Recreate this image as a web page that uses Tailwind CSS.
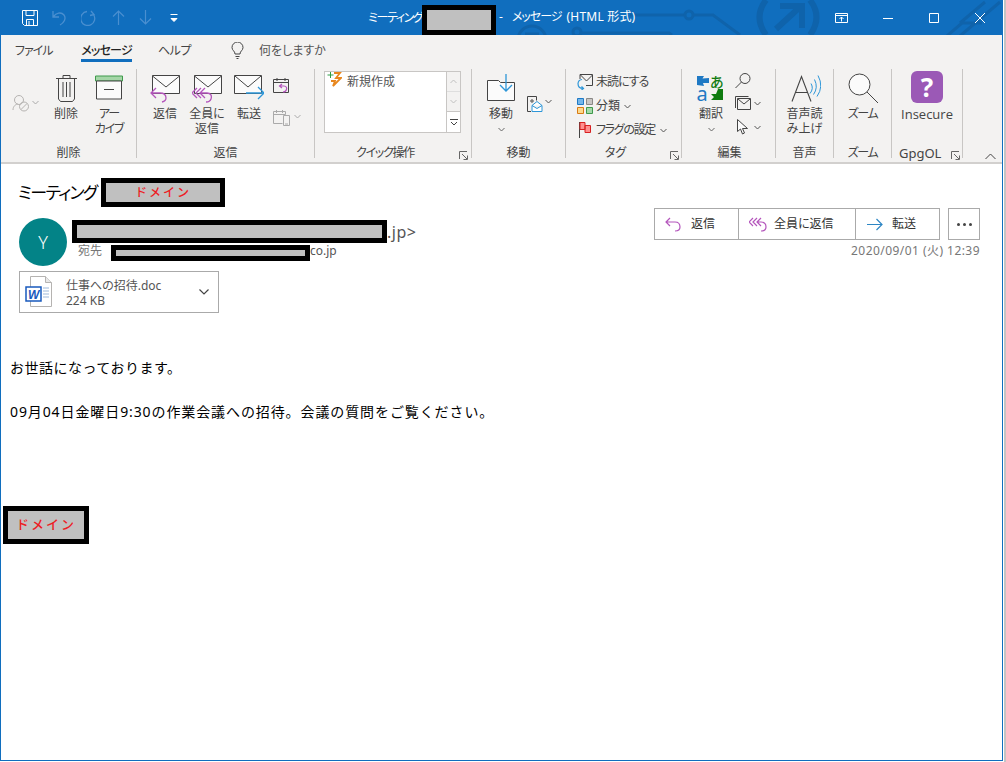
<!DOCTYPE html>
<html lang="ja">
<head>
<meta charset="utf-8">
<script src="https://cdn.jsdelivr.net/npm/@tailwindcss/browser@4"></script>
<title>Message</title>
</head>
<body class="w-[1006px] h-[762px] overflow-hidden bg-white">
<div class="flex w-[1006px] h-[762px] font-[family-name:Noto_Sans,Noto_Sans_CJK_JP,sans-serif] [font-feature-settings:'palt']">
<div class="w-[1003px] h-[761px] flex flex-col border-l border-r border-b border-[#106ebe] bg-white">

  <!-- title bar -->
  <header class="relative h-[35px] shrink-0 bg-[#106ebe] flex items-center text-white text-[12px] -ml-px -mr-px overflow-hidden">
    <svg class="absolute left-0 top-0" width="1003" height="35" viewBox="0 0 1003 35" fill="none" stroke="#0f63ab" stroke-width="3">
      <circle cx="532" cy="40" r="14"/><path d="M525 34h14"/><circle cx="577" cy="32" r="4"/><path d="M581 33h88l3 2"/>
      <path d="M630 15h55"/><circle cx="689" cy="15" r="4"/><path d="M693 15h20l27 20"/>
      <path d="M766 0q-13 17 0 35M810 0q13 17 0 35" stroke-width="6"/><path d="M776 29l24-22M780 6h22v22" stroke-width="6"/>
      <path d="M947 36l15-13h20M960 36l40-34M985 2l-25 21"/>
    </svg>
    <div class="relative flex items-center w-full h-full">
      <div class="flex items-center w-[368px] pl-[22px] gap-[14px]">
        <svg width="16" height="16" viewBox="0 0 16 16" fill="none" stroke="#fff"><path d="M.5.5h15v15h-13l-2-2zM4 .5v5h8v-5M4.5 15.5v-6h7v6M7 11v4"/></svg>
        <svg width="14" height="16" viewBox="0 0 14 16" fill="none" stroke="#4a8fd0" stroke-width="1.3"><path d="M1 1v6h6M1.5 6.5C4 3 9 1.500 12 5c2.500 3.500 0 8-4 10"/></svg>
        <svg width="16" height="16" viewBox="0 0 16 16" fill="none" stroke="#4a8fd0" stroke-width="1.3" class="ml-[1px]"><path d="M10 1l3 3.500-4 1M12.500 4.500A7 7 0 1 1 6 1.500"/></svg>
        <svg width="13" height="15" viewBox="0 0 13 15" fill="none" stroke="#4a8fd0" stroke-width="1.2" class="ml-[1px]"><path d="M6.500 15V1M1 6.500l5.500-5.500 5.500 5.500"/></svg>
        <svg width="13" height="15" viewBox="0 0 13 15" fill="none" stroke="#4a8fd0" stroke-width="1.2"><path d="M6.500 0v14M1 8.500l5.500 5.500 5.500-5.500"/></svg>
        <svg width="8" height="8" viewBox="0 0 8 8" fill="none" stroke="#fff" class="ml-[4px]"><path d="M.5 .5h7"/><path d="M1 4.500h6L4 7.500z" fill="#fff"/></svg>
      </div>
      <span class="whitespace-nowrap leading-[35px] w-[52px] mt-[-1px] tracking-[-1.400px]">ミーティング</span>
      <div class="w-[74px] h-[30px] mt-[5px] ml-[2px] border-[5px] border-black bg-[#c0c0c0]"></div>
      <div class="ml-[3px] flex whitespace-pre w-[336px] mt-[-1px]"><span>-</span><span class="ml-[9px] tracking-[-1px]">メッセージ</span><span class="ml-[5px] tracking-[.2px]">(HTML 形式)</span></div>
      <svg width="13" height="10" viewBox="0 0 13 10" fill="none" stroke="#fff"><path d="M.5.500h12v9H.5zM.5 2.500h12M6.500 8.500V4M4.500 6l2-2 2 2"/></svg>
      <svg width="10" height="10" viewBox="0 0 10 10" fill="none" stroke="#fff" class="ml-[35px]"><path d="M0 5.500h10"/></svg>
      <svg width="10" height="10" viewBox="0 0 10 10" fill="none" stroke="#fff" class="ml-[36px]"><path d="M.5.500h9v9h-9z"/></svg>
      <svg width="10" height="10" viewBox="0 0 10 10" fill="none" stroke="#fff" class="ml-[36px]"><path d="M0 0l10 10M10 0L0 10"/></svg>
    </div>
  </header>

  <!-- tabs -->
  <nav class="h-[27px] shrink-0 bg-[#f3f2f1] flex text-[12px] text-[#444] leading-[31px]">
    <span class="ml-[14px] w-[37px] whitespace-nowrap tracking-[-1px]">ファイル</span>
    <span class="ml-[29px] w-[51px] h-[27px] border-b-[3px] border-[#106ebe] font-medium text-[#222] text-center whitespace-nowrap tracking-[-.8px]">メッセージ</span>
    <span class="ml-[26px] w-[33px] whitespace-nowrap tracking-[-.5px]">ヘルプ</span>
    <svg class="ml-[40px] mt-[7px]" width="13" height="18" viewBox="0 0 13 18" fill="none" stroke="#444"><path d="M4 12c0-3-3-3.500-3-6.500a5.500 5.500 0 0 1 11 0C12 8.500 9 9 9 12zM4.500 14.500h4M5.500 16.500h2"/></svg>
    <span class="ml-[15px] whitespace-nowrap text-[#555]">何をしますか</span>
  </nav>

  <!-- ribbon -->
  <section class="relative h-[102px] shrink-0 bg-[#f3f2f1] pt-[7px] border-b-2 border-[#d2d0ce] flex text-[12px] text-[#444] leading-[14.500px]">

    <!-- 削除 -->
    <div class="w-[136px] h-[89px] border-r border-[#c8c6c4] flex flex-col">
      <div class="flex h-[73px] shrink-0 pt-[3px]">
        <div class="ml-[11px] w-[30px] pt-[22px] flex items-start">
          <svg width="18" height="18" viewBox="0 0 18 18" fill="none" stroke="#b5b3b1"><circle cx="7" cy="6" r="4.500"/><path d="M1 16c0-4 3-6 5-6"/><circle cx="12" cy="12.500" r="4.500"/><path d="M9 15.500l6-6"/></svg>
          <svg class="ml-[2px] mt-[6px]" width="7" height="5" viewBox="0 0 7 5" fill="none" stroke="#aaa"><path d="M.5 1l3 3 3-3"/></svg>
        </div>
        <div class="ml-[5px] w-[40px] flex flex-col items-center -translate-x-[1px]">
          <svg class="h-[32px] mb-[3px]" width="21" height="28" viewBox="0 0 21 28" fill="none" stroke="#444"><path d="M0 4.500h21M7 4V1.500h7V4M2.500 5v20l2 2.500h12l2-2.500V5M7 8v15M10.500 8v15M14 8v15"/></svg>
          <span>削除</span>
        </div>
        <div class="w-[44px] flex flex-col items-center text-center">
          <svg class="h-[32px] mb-[3px]" width="28" height="25" viewBox="0 0 28 25"><path fill="#a5d6a7" stroke="#3f9a4c" d="M.5.500h27v5H.5z"/><path fill="#fbfbfb" stroke="#444" d="M1.500 5.500h25v18h-25z"/><path stroke="#444" d="M9 14h10"/></svg>
          <span class="tracking-[-1.200px]">アー<br>カイブ</span>
        </div>
      </div>
      <div class="text-center pt-[4px]">削除</div>
    </div>

    <!-- 返信 -->
    <div class="w-[178px] h-[89px] border-r border-[#c8c6c4] flex flex-col">
      <div class="flex h-[73px] shrink-0 pt-[3px] pl-[7px]">
        <div class="w-[42px] flex flex-col items-center">
          <svg class="h-[32px] mb-[3px]" width="30" height="28" viewBox="0 0 30 28" fill="none"><path fill="#fbfbfb" stroke="#444" d="M2.500 1.500h27v18h-27z"/><path stroke="#444" d="M2.500 2l13.500 11 13.500-11"/><path stroke="#b455bc" stroke-width="1.300" d="M6 14l-5 5 5 5M1.500 19H10c4 0 6 2 6 5s-2 3.500-4 4"/></svg>
          <span>返信</span>
        </div>
        <div class="w-[42px] flex flex-col items-center text-center">
          <svg class="h-[32px] mb-[3px]" width="30" height="28" viewBox="0 0 30 28" fill="none"><path fill="#fbfbfb" stroke="#444" d="M2.500 1.500h27v18h-27z"/><path stroke="#444" d="M2.500 2l13.500 11 13.500-11"/><path stroke="#b455bc" stroke-width="1.300" d="M5 14l-5 5 5 5M9 14l-5 5 5 5M13 14l-5 5 5 5M9 19h6c4 0 5 3 4 6s-3 3-5 3"/></svg>
          <span class="whitespace-nowrap">全員に<br>返信</span>
        </div>
        <div class="w-[42px] flex flex-col items-center">
          <svg class="h-[32px] mb-[3px]" width="30" height="28" viewBox="0 0 30 28" fill="none"><path fill="#fbfbfb" stroke="#444" d="M.5 1.500h27v18H.5z"/><path stroke="#444" d="M1 2l13 11 13-11"/><path stroke="#2d96d8" stroke-width="1.300" d="M12 19h18M24 13l6 6-6 6"/></svg>
          <span>転送</span>
        </div>
        <div class="ml-[3px] w-[33px] flex flex-col pt-[5px] text-[#aaa]">
          <svg width="17" height="17" viewBox="0 0 17 17" fill="none"><path stroke="#444" d="M.5 2.500h15v13H.5zM.5 5.500h15M4 1v3M12 1v3"/><path stroke="#b455bc" stroke-width="1.200" d="M9 7L6.500 9 9 11M7 9h4c2.500 0 3 2 2.500 3.500S11 15 10 15"/></svg>
          <div class="flex items-start mt-[15px]">
            <svg width="17" height="17" viewBox="0 0 17 17" fill="none" stroke="#aaa"><path d="M9.500 14.500H.5v-12h12v3M.5 5.500h12M3.500 1v3M9.500 1v3M10.500 6.500h6v10h-6zM12 15h3"/></svg>
            <svg class="ml-[4px] mt-[5px]" width="7" height="5" viewBox="0 0 7 5" fill="none" stroke="#aaa"><path d="M.5 1l3 3 3-3"/></svg>
          </div>
        </div>
      </div>
      <div class="text-center pt-[4px]">返信</div>
    </div>

    <!-- クイック操作 -->
    <div class="relative w-[157px] h-[89px] border-r border-[#c8c6c4] flex flex-col">
      <div class="h-[73px] shrink-0 pt-[2px] pl-[9px]">
        <div class="w-[137px] h-[62px] flex border border-[#c8c6c4] bg-white">
          <div class="flex-1 flex items-start pl-[2px]">
            <svg width="15" height="17" viewBox="0 0 15 17" fill="none"><path stroke="#2e9e46" d="M3.500 0v6M.5 3h6"/><path stroke="#e8871e" stroke-width="1.800" d="M7 1h6l-4 5h5L6 14l2-5H4"/></svg>
            <span class="ml-[5px] leading-[20px] text-[#555]">新規作成</span>
          </div>
          <div class="w-[14px] flex flex-col border-l border-[#c8c6c4] bg-[#f3f2f1]">
            <div class="h-[20px] border-b border-[#dedede] flex items-center justify-center"><svg width="7" height="5" viewBox="0 0 7 5" fill="none" stroke="#c0c0c0"><path d="M.5 4l3-3 3 3"/></svg></div>
            <div class="h-[20px] border-b border-[#c8c6c4] flex items-center justify-center"><svg width="7" height="5" viewBox="0 0 7 5" fill="none" stroke="#c0c0c0"><path d="M.5 1l3 3 3-3"/></svg></div>
            <div class="flex-1 flex items-center justify-center bg-white"><svg width="8" height="7" viewBox="0 0 8 7" fill="none" stroke="#444"><path d="M0 .5h8M1 3l3 3 3-3"/></svg></div>
          </div>
        </div>
      </div>
      <div class="text-center pt-[4px] pr-[16px] tracking-[-1.300px]">クイック操作</div>
      <svg class="absolute left-[144px] top-[82px]" width="9" height="9" viewBox="0 0 9 9" fill="none" stroke="#666"><path d="M.5 8V.5H8M3 3l5 5M4.500 8.500h4v-4"/></svg>
    </div>

    <!-- 移動 -->
    <div class="w-[94px] h-[89px] border-r border-[#c8c6c4] flex flex-col">
      <div class="flex h-[73px] shrink-0 pt-[3px] pl-[9px]">
        <div class="w-[40px] flex flex-col items-center">
          <svg class="h-[32px] mb-[3px]" width="28" height="28" viewBox="0 0 28 28" fill="none"><path fill="#fbfbfb" stroke="#444" d="M.5 26.500V6.500h11l2 2h14v18z"/><path stroke="#2d96d8" stroke-width="1.300" d="M19 0v16M13 11l6 6 6-6"/></svg>
          <span>移動</span>
          <svg class="mt-[5px]" width="7" height="5" viewBox="0 0 7 5" fill="none" stroke="#666"><path d="M.5 1l3 3 3-3"/></svg>
        </div>
        <div class="ml-[6px] pt-[24px] flex items-start">
          <svg width="16" height="16" viewBox="0 0 16 16" fill="none"><path stroke="#444" d="M4 15.500H.5V.5h9v4"/><circle cx="5" cy="5" r="1.200" stroke="#444"/><path fill="#fff" stroke="#2d96d8" d="M5 9.500l5-4 5 4v6H5zM5 9.500l5 3 5-3"/></svg>
          <svg class="ml-[2px] mt-[3px]" width="7" height="5" viewBox="0 0 7 5" fill="none" stroke="#555"><path d="M.5 1l3 3 3-3"/></svg>
        </div>
      </div>
      <div class="text-center pt-[4px]">移動</div>
    </div>

    <!-- タグ -->
    <div class="relative w-[116px] h-[89px] border-r border-[#c8c6c4] flex flex-col">
      <div class="h-[73px] shrink-0 pl-[11px] pt-[5px] flex flex-col gap-[8px]">
        <div class="flex items-center h-[16px]">
          <svg width="16" height="16" viewBox="0 0 16 16" fill="none"><path stroke="#444" d="M3 5V.5h12.500v11H9M3.500 1l6 6 6-6"/><path stroke="#2d96d8" stroke-width="1.200" d="M5 5.500A4.500 4.500 0 0 0 1 9.500c0 3 2 5 5 5M4.500 12.500l2 2-2 1.500"/></svg>
          <span class="ml-[3px] whitespace-nowrap tracking-[-1px]">未読にする</span>
        </div>
        <div class="flex items-center h-[16px]">
          <svg width="16" height="16" viewBox="0 0 16 16"><path fill="#74b6ea" stroke="#1f79c4" d="M.5.500h6v6h-6z"/><path fill="#c8c6c4" stroke="#8a8886" d="M9.500.500h6v6h-6z"/><path fill="#fcd98c" stroke="#d87a14" d="M.5 9.500h6v6h-6z"/><path fill="#a5d9a9" stroke="#3f9a4c" d="M9.500 9.500h6v6h-6z"/></svg>
          <span class="ml-[3px]">分類</span>
          <svg class="ml-[4px] mt-[1px]" width="7" height="5" viewBox="0 0 7 5" fill="none" stroke="#555"><path d="M.5 1l3 3 3-3"/></svg>
        </div>
        <div class="flex items-center h-[16px]">
          <svg class="ml-[2px]" width="14" height="16" viewBox="0 0 14 16"><path stroke="#444" d="M.5 0v16"/><path fill="#ff8f8f" stroke="#d62020" d="M1 .5h5v7H1zM6 3.500h5.500v7H6z"/></svg>
          <span class="ml-[3px] whitespace-nowrap tracking-[-1.300px]">フラグの設定</span>
          <svg class="ml-[5px] mt-[1px]" width="7" height="5" viewBox="0 0 7 5" fill="none" stroke="#555"><path d="M.5 1l3 3 3-3"/></svg>
        </div>
      </div>
      <div class="text-center pt-[4px] pr-[16px]">タグ</div>
      <svg class="absolute left-[104px] top-[82px]" width="9" height="9" viewBox="0 0 9 9" fill="none" stroke="#666"><path d="M.5 8V.5H8M3 3l5 5M4.500 8.500h4v-4"/></svg>
    </div>

    <!-- 編集 -->
    <div class="w-[94px] h-[89px] border-r border-[#c8c6c4] flex flex-col">
      <div class="flex h-[73px] shrink-0 pt-[3px] pl-[9px]">
        <div class="w-[40px] flex flex-col items-center">
          <svg class="h-[32px] mb-[3px] overflow-visible" width="28" height="28" viewBox="0 0 28 28"><path fill="#1f79c4" d="M0 2l7 0-1.500 2.500L12 4v5H6l1 3-7-1z"/><text x="-.5" y="27" font-size="20" fill="#1f79c4" font-family="Noto Sans">a</text><text x="13" y="13" font-size="14" font-weight="500" fill="#107c10" font-family="Noto Sans CJK JP">あ</text><path fill="#107c10" d="M26 15v11H14l3-3-3-3h5l2-5z"/></svg>
          <span>翻訳</span>
          <svg class="mt-[5px]" width="7" height="5" viewBox="0 0 7 5" fill="none" stroke="#666"><path d="M.5 1l3 3 3-3"/></svg>
        </div>
        <div class="ml-[4px] flex flex-col">
          <svg class="h-[17px]" width="16" height="16" viewBox="0 0 16 16" fill="none" stroke="#444"><circle cx="10" cy="6" r="5"/><path d="M6.500 9.500L.5 15.500"/></svg>
          <div class="flex items-center mt-[7px]">
            <svg width="16" height="14" viewBox="0 0 16 14" fill="none" stroke="#444"><path d="M.5 12V.5h13M2.500 2.500h13v11h-13zM3 3l6 5 6-5"/></svg>
            <svg class="ml-[3px]" width="7" height="5" viewBox="0 0 7 5" fill="none" stroke="#555"><path d="M.5 1l3 3 3-3"/></svg>
          </div>
          <div class="flex items-center mt-[9px] pl-[2px]">
            <svg width="12" height="16" viewBox="0 0 12 16" fill="#fbfbfb" stroke="#444"><path d="M.5.500v12l3-2.500 2 5 2-1-2-4.500h5z"/></svg>
            <svg class="ml-[5px]" width="7" height="5" viewBox="0 0 7 5" fill="none" stroke="#555"><path d="M.5 1l3 3 3-3"/></svg>
          </div>
        </div>
      </div>
      <div class="text-center pt-[4px] pl-[2px]">編集</div>
    </div>

    <!-- 音声 -->
    <div class="w-[58px] h-[89px] border-r border-[#c8c6c4] flex flex-col">
      <div class="h-[73px] shrink-0 pt-[3px] flex flex-col items-center text-center">
        <svg class="h-[32px] mb-[3px] ml-[2px]" width="30" height="29" viewBox="0 0 30 29" fill="none"><path stroke="#444" stroke-width="1.100" d="M1 28L10.500 3l9.500 25M4.500 19h12"/><path stroke="#2d96d8" d="M20 10q3 5-1 10M23.500 6q4 8-1 15M27 2q6 11 -1 21"/></svg>
        <span class="whitespace-nowrap">音声読<br>み上げ</span>
      </div>
      <div class="text-center pt-[4px]">音声</div>
    </div>

    <!-- ズーム -->
    <div class="w-[58px] h-[89px] border-r border-[#c8c6c4] flex flex-col">
      <div class="h-[73px] shrink-0 pt-[3px] flex flex-col items-center">
        <svg class="h-[32px] mb-[3px]" width="30" height="30" viewBox="0 0 30 30" fill="none" stroke="#444"><circle cx="11.500" cy="11.500" r="10.500" fill="#fbfbfb"/><path d="M19 19l11 11"/></svg>
        <span class="whitespace-nowrap tracking-[-1.300px]">ズーム</span>
      </div>
      <div class="text-center pt-[4px] tracking-[-1.300px]">ズーム</div>
    </div>

    <!-- GpgOL -->
    <div class="relative w-[71px] h-[89px] border-r border-[#c8c6c4] flex flex-col">
      <div class="h-[73px] shrink-0 pt-[2px] flex flex-col items-center">
        <div class="w-[32px] h-[32px] mb-[4px] rounded-[6px] bg-[#9b59b6] text-white text-[26px] font-bold leading-[32px] text-center">?</div>
        <span class="text-[13px] font-[family-name:Open_Sans,sans-serif]">Insecure</span>
      </div>
      <div class="pt-[4px] pl-[7px] text-[13px]">GpgOL</div>
      <svg class="absolute left-[59px] top-[82px]" width="9" height="9" viewBox="0 0 9 9" fill="none" stroke="#666"><path d="M.5 8V.5H8M3 3l5 5M4.500 8.500h4v-4"/></svg>
    </div>

    <svg class="ml-[22px] mt-[84px]" width="11" height="7" viewBox="0 0 11 7" fill="none" stroke="#444"><path d="M.5 6l5-5 5 5"/></svg>
  </section>

  <!-- message -->
  <main class="flex-1 bg-white flex flex-col">
    <div class="flex items-start pl-[17px] pt-[14px]">
      <h1 class="text-[17px] leading-[30px] font-normal text-black whitespace-nowrap w-[83px] tracking-[-1.700px]">ミーティング</h1>
      <div class="w-[124px] h-[29px] border-[5px] border-black bg-[#c0c0c0] flex items-center justify-center text-[12px] leading-none font-medium text-[#ed1c24] tracking-[2px] [font-feature-settings:normal]">ドメイン</div>
    </div>

    <div class="flex pl-[18px] pr-[22px]">
      <div class="w-[48px] h-[48px] mt-[10px] rounded-full bg-[#038387] text-white text-[18px] font-light flex items-center justify-center">Y</div>
      <div class="ml-[5px] flex-1 pt-[12px]">
        <div class="flex items-end h-[23px]">
          <div class="w-[315px] h-[23px] border-[5px] border-black bg-[#c0c0c0]"></div>
          <span class="text-[16px] leading-[26px] text-[#555] -mb-[2px] tracking-[.5px]">.jp&gt;</span>
        </div>
        <div class="flex items-start mt-[2px]">
          <span class="ml-[6px] w-[33px] -mt-[2px] text-[12px] leading-[16px] text-[#777]">宛先</span>
          <div class="w-[199px] h-[16px] border-[5px] border-black bg-[#c0c0c0]"></div>
          <span class="-mt-[2px] text-[12px] leading-[16px] text-[#555]">co.jp</span>
        </div>
      </div>
      <div class="flex flex-col items-end">
        <div class="flex gap-[8px]">
          <div class="flex h-[32px] border border-[#aaa] text-[12px] text-[#333]">
            <div class="w-[84px] border-r border-[#aaa] flex items-center pl-[10px] gap-[9px]">
              <svg width="17" height="15" viewBox="0 0 17 15" fill="none" stroke="#b455bc" stroke-width="1.200"><path d="M5 1L1 5l4 4M1.500 5H10c3 0 5 2 5 5s-2 4-5 4"/></svg><span>返信</span>
            </div>
            <div class="w-[117px] border-r border-[#aaa] flex items-center pl-[10px] gap-[7px]">
              <svg width="18" height="15" viewBox="0 0 18 15" fill="none" stroke="#b455bc" stroke-width="1.200"><path d="M4 1L0 5l4 4M8 1L4 5l4 4M12 1L8 5l4 4M8.500 5H12c3 0 5 2 5 5s-2 4-5 4"/></svg><span class="whitespace-nowrap">全員に返信</span>
            </div>
            <div class="w-[83px] flex items-center pl-[11px] gap-[9px]">
              <svg width="16" height="13" viewBox="0 0 16 13" fill="none" stroke="#2d86c4" stroke-width="1.200"><path d="M0 6.500h15M9.500 1l5.500 5.500L9.500 12"/></svg><span>転送</span>
            </div>
          </div>
          <div class="w-[32px] h-[32px] border border-[#aaa] flex items-center justify-center gap-[3px]">
            <span class="w-[3px] h-[3px] rounded-full bg-[#444]"></span><span class="w-[3px] h-[3px] rounded-full bg-[#444]"></span><span class="w-[3px] h-[3px] rounded-full bg-[#444]"></span>
          </div>
        </div>
        <div class="mt-[3px] text-[12px] leading-[16px] text-[#777] whitespace-nowrap tracking-[.45px]">2020/09/01 (火) 12:39</div>
      </div>
    </div>

    <div class="ml-[18px] mt-[5px] w-[200px] h-[42px] border border-[#aaa] flex items-center">
      <svg class="ml-[5px]" width="28" height="32" viewBox="0 0 28 32" fill="none"><path fill="#fff" stroke="#b5b3b1" d="M5.500.5h15l6 6v24h-21z"/><path fill="#e9e9e9" stroke="#b5b3b1" d="M20.500.5v6h6"/><path stroke="#9db8d9" d="M18 12h6M18 15h6M18 18h6M18 21h6"/><path fill="#fff" stroke="#185abd" stroke-width="1.500" d="M1 11h15v14H1z"/><text x="3" y="23" font-size="12" font-weight="700" font-style="italic" fill="#185abd" font-family="Liberation Sans">W</text></svg>
      <div class="ml-[13px] w-[130px] pt-[1px] text-[12px] leading-[15px] text-[#555]">
        <div class="whitespace-nowrap">仕事への招待.doc</div>
        <div>224 KB</div>
      </div>
      <svg class="ml-[3px]" width="10" height="6" viewBox="0 0 10 6" fill="none" stroke="#444" stroke-width="1.200"><path d="M.5.500L5 5 9.500.500"/></svg>
    </div>

    <div class="mt-[44px] pl-[9px] text-[14px] leading-[22px] text-black font-normal [font-feature-settings:normal]">
      <p class="tracking-[.5px]">お世話になっております。</p>
      <p class="mt-[22px] whitespace-nowrap tracking-[.9px]">09月04日金曜日9:30の作業会議への招待。会議の質問をご覧ください。</p>
    </div>

    <div class="ml-[2px] mt-[83px] w-[86px] h-[38px] border-[5px] border-black bg-[#c0c0c0] flex items-center justify-center text-[13px] font-medium text-[#ed1c24] tracking-[2px] [font-feature-settings:normal]">ドメイン</div>
  </main>
</div>
<div class="w-[2px] h-[762px] ml-[1px] bg-[#c4c4c4]"></div>
</div>
</body>
</html>
